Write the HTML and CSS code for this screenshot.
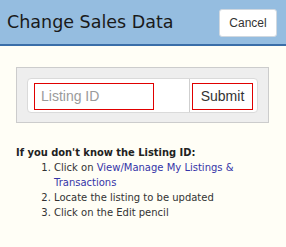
FILE: index.html
```html
<!DOCTYPE html>
<html>
<head>
<meta charset="utf-8">
<link rel="stylesheet" href="styles.css">
</head>
<body>
<header class="header">
  <h1 class="title">Change Sales Data</h1>
  <button class="cancel">Cancel</button>
</header>
<main class="content">
  <div class="panel">
    <div class="group">
      <div class="input-wrap"><input class="input" type="text" placeholder="Listing ID"></div>
      <div class="submit-wrap"><span class="submit">Submit</span></div>
    </div>
  </div>
  <div class="help">
    <p class="help-title">If you don't know the Listing ID:</p>
    <ol class="steps">
      <li>Click on <a href="#" class="link">View/Manage My Listings &amp; Transactions</a></li>
      <li>Locate the listing to be updated</li>
      <li>Click on the Edit pencil</li>
    </ol>
  </div>
</main>
</body>
</html>
```
FILE: styles.css
```css
html, body {
  margin: 0;
  padding: 0;
  background: #fffef6;
  width: 286px;
  height: 247px;
  overflow: hidden;
}
.header {
  height: 44px;
  background: #95bde0;
  border-bottom: 2px solid #3a6ea8;
  display: flex;
  align-items: center;
  justify-content: space-between;
  padding: 0 9px 0 7px;
  box-sizing: content-box;
}
.title {
  margin: 0;
  font-family: "DejaVu Sans", Verdana, sans-serif;
  font-weight: normal;
  font-size: 17.5px;
  color: #1a1a1a;
  padding-bottom: 1px;
}
.cancel {
  width: 58px;
  height: 28px;
  background: #fff;
  border: 1px solid #d0d8e0;
  border-radius: 3px;
  font-family: "Liberation Sans", Arial, sans-serif;
  font-size: 12px;
  color: #333;
  padding: 0;
  margin-top: 2px;
}
.content {
  padding: 21px 17px 0 16px;
}
.panel {
  background: #eeeeee;
  border: 1px solid #cccccc;
  padding: 10px 10px 9px 10px;
}
.group {
  display: flex;
  height: 33px;
  background: #fff;
  border: 1px solid #dadada;
  border-radius: 4px;
  align-items: stretch;
}
.input-wrap {
  width: 155px;
  border-right: 1px solid #cfcfcf;
  display: flex;
  align-items: center;
  padding-left: 6px;
}
.input {
  width: 120px;
  height: 27px;
  box-sizing: border-box;
  border: 1px solid #e00000;
  padding: 0 6px;
  font-family: "Liberation Sans", Arial, sans-serif;
  font-size: 14px;
  color: #333;
  outline: none;
  background: #fff;
  margin-top: 1px;
}
.input::placeholder {
  color: #9a9a9a;
}
.submit-wrap {
  flex: 1;
  display: flex;
  align-items: center;
  padding-left: 2px;
}
.submit {
  display: flex;
  align-items: center;
  justify-content: center;
  width: 61px;
  height: 27px;
  box-sizing: border-box;
  border: 1px solid #e00000;
  background: #fff;
  font-family: "Liberation Sans", Arial, sans-serif;
  font-size: 14px;
  color: #333;
  margin-top: 1px;
}
.help {
  font-family: "DejaVu Sans", Verdana, sans-serif;
  font-size: 10px;
  color: #222;
  line-height: 15px;
  margin-top: 22px;
}
.help-title {
  margin: 0;
  font-family: "DejaVu Sans Condensed", "DejaVu Sans", sans-serif;
  font-stretch: condensed;
  font-weight: bold;
  font-size: 11px;
}
.steps {
  margin: 0;
  padding-left: 38px;
  color: #333;
}
.link {
  color: #3535a8;
  text-decoration: none;
}
```
